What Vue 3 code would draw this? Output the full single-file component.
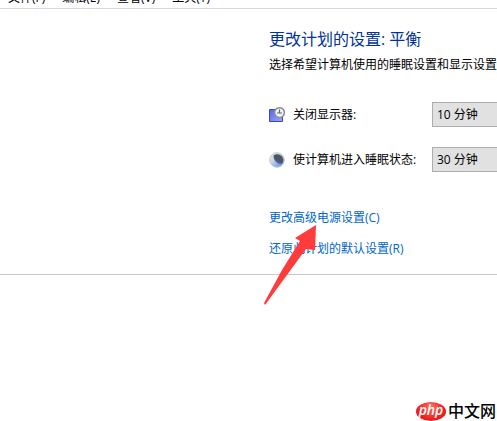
<script setup>
import { ref } from 'vue'

const menus = ['文件(F)', '编辑(E)', '查看(V)', '工具(T)']
const display = ref('10 分钟')
const sleep = ref('30 分钟')
</script>

<template>
  <div class="window">
    <nav class="menubar">
      <button v-for="m in menus" :key="m" type="button">{{ m }}</button>
    </nav>

    <main class="content">
      <h1>更改计划的设置: 平衡</h1>
      <p class="intro">选择希望计算机使用的睡眠设置和显示设置</p>

      <form class="settings">
        <div class="setting">
          <svg class="icon" viewBox="0 0 16 16" aria-hidden="true">
            <defs>
              <linearGradient id="screen" x1="0" y1="0" x2="1" y2="1">
                <stop offset="0" stop-color="#5365e6" />
                <stop offset="1" stop-color="#9eaafc" />
              </linearGradient>
            </defs>
            <path d="M0.5 2.5H13.5V14.5H0.5Z" fill="url(#screen)" stroke="#3b49b8" />
            <circle cx="10.5" cy="5.6" r="4.9" fill="#f2f5f5" stroke="#8c9294" stroke-width="1.5" />
            <path d="M10.5 2.5V6.5M8 6H13" fill="none" stroke="#536a80" stroke-width="1.2" />
          </svg>
          <label for="display">关闭显示器:</label>
          <select id="display" v-model="display">
            <option>10 分钟</option>
          </select>
        </div>
        <div class="setting">
          <svg class="icon" viewBox="0 0 16 16" aria-hidden="true">
            <defs>
              <linearGradient id="moon" x1="0" y1="0" x2="0.7" y2="1">
                <stop offset="0" stop-color="#e9eef2" />
                <stop offset="0.5" stop-color="#c3d4ee" />
                <stop offset="1" stop-color="#6b97e4" />
              </linearGradient>
              <linearGradient id="shade" x1="0.8" y1="0" x2="0.3" y2="1">
                <stop offset="0" stop-color="#54575b" />
                <stop offset="0.65" stop-color="#4d5668" />
                <stop offset="1" stop-color="#5b8de8" />
              </linearGradient>
            </defs>
            <circle cx="8" cy="8" r="7.3" fill="url(#moon)" stroke="#c3c9d0" />
            <path d="M4.5 3.5C8 0.5 14.5 3 14.3 8C14.2 10.5 13 12 11.5 12.2C7.5 12 4.5 8 4.5 3.5Z" fill="url(#shade)" />
          </svg>
          <label for="sleep">使计算机进入睡眠状态:</label>
          <select id="sleep" v-model="sleep">
            <option>30 分钟</option>
          </select>
        </div>
      </form>

      <div class="links">
        <a href="#advanced">更改高级电源设置(C)</a>
        <a href="#restore">还原此计划的默认设置(R)</a>
        <svg class="pointer" viewBox="0 0 54 82" aria-hidden="true">
          <path d="M52 1L31 14L36 17L18 46L0 79L1 81L20 55L42 25L51 26Z" fill="#ff3b3b" />
        </svg>
      </div>
    </main>

    <footer class="footer">
      <div class="brand">
        <span class="badge">php</span>
        <span class="site">中文网</span>
      </div>
    </footer>
  </div>
</template>

<style>
body {
  margin: 0;
  background: #fff;
}
</style>

<style scoped>
.window {
  display: flex;
  flex-direction: column;
  min-height: 100vh;
  overflow: hidden;
  font: 12px/16px "Open Sans", "Noto Sans CJK SC", sans-serif;
  color: #000;
}
.menubar {
  display: flex;
  align-items: flex-end;
  gap: 17px;
  height: 8px;
  padding: 0 8px;
  overflow: hidden;
  border-bottom: 1px solid #d9d9d9;
}
.menubar button {
  flex: none;
  padding: 0 0 2px;
  border: 0;
  background: none;
  font: inherit;
  color: inherit;
}
.content {
  padding: 20px 0 17px 269px;
  border-bottom: 1px solid #c8c8c8;
  white-space: nowrap;
}
h1 {
  margin: 0;
  font-size: 16px;
  line-height: 20px;
  font-weight: 400;
  color: #003399;
}
.intro {
  margin: 8px 0 0;
}
.settings {
  display: grid;
  gap: 20px;
  margin-top: 29px;
}
.setting {
  display: grid;
  grid-template-columns: 16px 131px 140px;
  column-gap: 8px;
  align-items: center;
}
.icon {
  width: 16px;
  height: 16px;
}
.setting select {
  appearance: none;
  height: 25px;
  padding: 0 4px;
  border: 1px solid #adadad;
  border-radius: 0;
  background: #e1e1e1;
  font: inherit;
  color: inherit;
}
.links {
  position: relative;
  display: flex;
  flex-direction: column;
  align-items: flex-start;
  gap: 15px;
  margin-top: 38px;
}
.links a {
  color: #0066cc;
  text-decoration: none;
}
.pointer {
  position: absolute;
  left: -5px;
  top: 14px;
  width: 54px;
  height: 82px;
  pointer-events: none;
}
.footer {
  flex: 1;
  display: flex;
  align-items: flex-end;
  justify-content: flex-end;
}
.brand {
  display: flex;
  align-items: center;
  gap: 2px;
  padding-right: 1px;
}
.badge {
  width: 30px;
  height: 19px;
  border-radius: 50%;
  background: radial-gradient(ellipse at 50% 25%, #ff6a5c, #ee1c1c 65%);
  color: #fff;
  font: italic 600 14px/16px "Open Sans", sans-serif;
  text-align: center;
}
.site {
  font-size: 16px;
  line-height: 19px;
  font-weight: 500;
}
</style>
